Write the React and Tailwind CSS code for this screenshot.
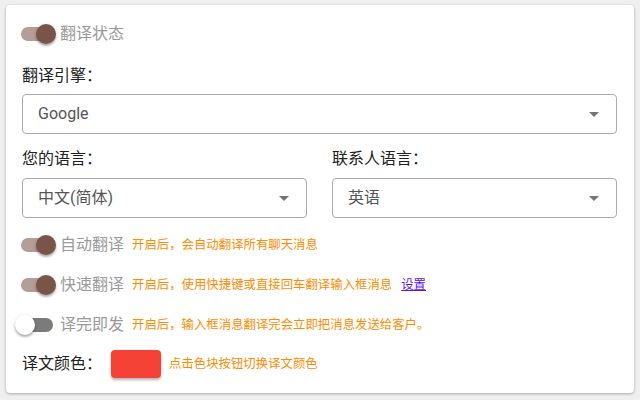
import React, { useState } from "react";

const font = "font-['Roboto','Noto_Sans_CJK_SC',sans-serif]";

function Toggle({ on }) {
  return (
    <div className="relative w-[38px] h-[20px] ml-[-7px] shrink-0">
      <div
        className={
          "absolute left-[6px] top-[3px] w-[32px] h-[14px] rounded-full " +
          (on ? "bg-[#b59e97]" : "bg-[#7b7b7b]")
        }
      />
      <div
        className={
          "absolute top-0 w-[20px] h-[20px] rounded-full shadow-[0_2px_2px_rgba(0,0,0,0.25),0_1px_4px_rgba(0,0,0,0.15)] " +
          (on ? "left-[21px] bg-[#795548]" : "left-0 bg-white")
        }
      />
    </div>
  );
}

function Select({ value, className }) {
  return (
    <div
      className={
        "h-[40px] border border-[#ababab] rounded-[4px] flex items-center justify-between pl-[15px] pr-[10px] " +
        className
      }
    >
      <span className="text-[16px] text-[#555] leading-none">{value}</span>
      <svg width="24" height="24" viewBox="0 0 24 24" className="fill-[#757575]">
        <path d="M7 10l5 5 5-5z" />
      </svg>
    </div>
  );
}

function SwitchRow({ on, label, hint, link }) {
  return (
    <div className="h-[40px] flex items-center">
      <Toggle on={on} />
      <span className="ml-[7px] text-[16px] text-[#9a9a9a] leading-none">{label}</span>
      {hint && (
        <span className="ml-[8px] text-[12.4px] text-[#ff8c00] leading-none">{hint}</span>
      )}
      {link && (
        <a href="#" className="ml-[9px] text-[12.4px] text-[#5b14e6] underline leading-none">
          {link}
        </a>
      )}
    </div>
  );
}

export default function App() {
  const [color] = useState("#f44336");

  return (
    <div className={"w-[640px] h-[400px] bg-[#efefef] pt-[5px] pl-[6px] " + font}>
      <div className="w-[628px] h-[388px] bg-white rounded-[4px] shadow-[0_1px_3px_rgba(0,0,0,0.3)] pt-[10px] pl-[16px] pr-[17px]">
        <div className="h-[38px] flex items-center">
          <Toggle on />
          <span className="ml-[7px] text-[16px] text-[#9a9a9a] leading-none">翻译状态</span>
        </div>

        <div className="mt-[11px] h-[24px] flex items-center text-[16px] text-[#212121]">
          翻译引擎：
        </div>
        <Select value="Google" className="mt-[6px]" />

        <div className="mt-[13px] grid grid-cols-2 gap-x-[25px]">
          <div>
            <div className="h-[24px] flex items-center text-[16px] text-[#212121]">您的语言：</div>
            <Select value="中文(简体)" className="mt-[7px]" />
          </div>
          <div>
            <div className="h-[24px] flex items-center text-[16px] text-[#212121]">联系人语言：</div>
            <Select value="英语" className="mt-[7px]" />
          </div>
        </div>

        <div className="mt-[7px]">
          <SwitchRow on label="自动翻译" hint="开启后，会自动翻译所有聊天消息" />
          <SwitchRow
            on
            label="快速翻译"
            hint="开启后，使用快捷键或直接回车翻译输入框消息"
            link="设置"
          />
          <SwitchRow
            on={false}
            label="译完即发"
            hint="开启后，输入框消息翻译完会立即把消息发送给客户。"
          />
        </div>

        <div className="h-[38px] flex items-center">
          <span className="text-[16px] text-[#212121] leading-none">译文颜色：</span>
          <button
            className="ml-[9px] w-[50px] h-[28px] rounded-[4px] shadow-[0_2px_3px_rgba(0,0,0,0.3)]"
            style={{ backgroundColor: color }}
          />
          <span className="ml-[8px] text-[12.4px] text-[#ff8c00] leading-none">
            点击色块按钮切换译文颜色
          </span>
        </div>
      </div>
    </div>
  );
}
